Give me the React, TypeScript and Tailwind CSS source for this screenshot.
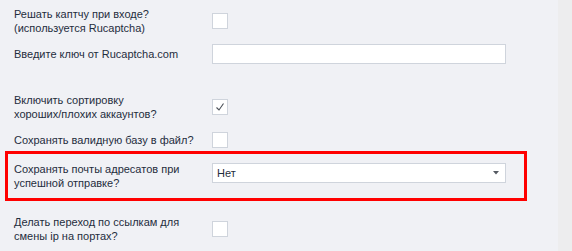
import React from 'react';

const Check = ({ checked = false }: { checked?: boolean }) => (
  <div className="w-4 h-4 bg-white border border-[#cfd4dc] flex items-center justify-center shrink-0">
    {checked && (
      <svg width="10" height="10" viewBox="0 0 10 10">
        <path d="M1.5 5.5 L4 8 L8.5 1.5" fill="none" stroke="#4a4f57" strokeWidth="1.1" />
      </svg>
    )}
  </div>
);

const Label = ({ children }: { children: React.ReactNode }) => (
  <div className="w-[212px] shrink-0 pl-[14px] leading-[14px] whitespace-nowrap">{children}</div>
);

export default function App() {
  return (
    <div className="w-[572px] h-[251px] flex bg-[#f0f1f5] text-[11px] text-[#1f2d3d] overflow-hidden" style={{ fontFamily: '"Liberation Sans", Arial, sans-serif' }}>
      <div className="w-[558px] flex flex-col pt-[5px]">
        {/* captcha */}
        <div className="h-[32px] flex items-center">
          <Label>Решать каптчу при входе?<br />(используется Rucaptcha)</Label>
          <Check />
        </div>
        <div className="h-[34px] flex items-center">
          <Label>Введите ключ от Rucaptcha.com</Label>
          <div className="w-[294px] h-[20px] bg-white border border-[#cfd4dc]" />
        </div>

        <div className="h-[20px]" />

        <div className="h-[32px] flex items-center">
          <Label>Включить сортировку<br />хороших/плохих аккаунтов?</Label>
          <Check checked />
        </div>
        <div className="h-[28px] pt-[6px] flex items-center">
          <Label>Сохранять валидную базу в файл?</Label>
          <Check />
        </div>

        {/* highlighted */}
        <div className="ml-[5px] w-[522px] h-[50px] border-[3px] border-[#ff0000] flex items-start pt-[9px]">
          <div className="w-[204px] shrink-0 pl-[6px] leading-[14px] whitespace-nowrap -mt-[1px]">
            Сохранять почты адресатов при<br />успешной отправке?
          </div>
          <div className="w-[294px] h-[20px] bg-white border border-[#cfd4dc] flex items-center justify-between pl-[4px] pr-[6px]">
            <span>Нет</span>
            <svg width="6" height="4" viewBox="0 0 6 4">
              <path d="M0 0 H6 L3 3.5 Z" fill="#555a62" />
            </svg>
          </div>
        </div>

        <div className="h-[12px]" />
        <div className="h-[32px] flex items-center">
          <Label>Делать переход по ссылкам для<br />смены ip на портах?</Label>
          <Check />
        </div>
      </div>
      <div className="flex-1 bg-[#ededee]" />
    </div>
  );
}
